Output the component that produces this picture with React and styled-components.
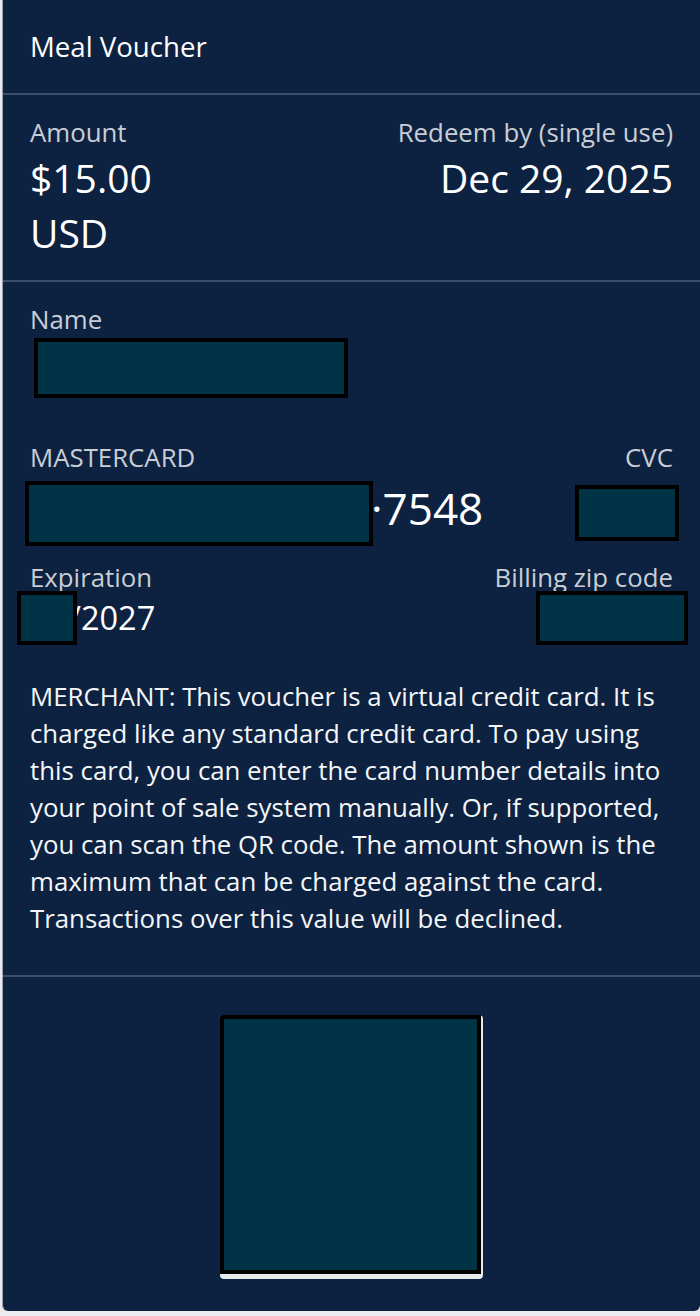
import React from 'react';
import styled, { createGlobalStyle } from 'styled-components';

const GlobalStyle = createGlobalStyle`
  html, body {
    margin: 0;
    padding: 0;
    background: #ececee;
  }
  body {
    font-family: 'Open Sans', 'Noto Sans', sans-serif;
  }
`;

const Card = styled.div`
  margin-left: 2px;
  height: 1311px;
  background-color: #0d2240;
  color: #ffffff;
  border-left: 1px solid #9aa3ae;
  border-radius: 0 0 6px 6px;
  box-shadow: 0 2px 3px rgba(0, 0, 0, 0.08);
  overflow: hidden;
`;

const Section = styled.div`
  padding: ${(props) => props.pad || '20px 27px 20px 27px'};
  border-bottom: ${(props) => (props.last ? 'none' : '2px solid #3d4f68')};
`;

const Title = styled.div`
  font-size: 27.6px;
  line-height: 33px;
`;

const Split = styled.div`
  display: flex;
  justify-content: space-between;
  align-items: flex-start;
`;

const Column = styled.div`
  display: flex;
  flex-direction: column;
  align-items: ${(props) => (props.right ? 'flex-end' : 'flex-start')};
  text-align: ${(props) => (props.right ? 'right' : 'left')};
`;

const Label = styled.div`
  font-size: 25.8px;
  line-height: 30px;
  color: #c9ced6;
`;

const BigValue = styled.div`
  font-size: 39px;
  line-height: 55px;
`;

const Redacted = styled.div`
  position: relative;
  z-index: 1;
  box-sizing: border-box;
  width: ${(props) => props.w}px;
  height: ${(props) => props.h}px;
  background-color: #003346;
  border: 4px solid #000;
  flex-shrink: 0;
`;

const Field = styled.div`
  display: flex;
  flex-direction: column;
  margin-bottom: ${(props) => props.mb || 0}px;
`;

const NumberRow = styled.div`
  display: flex;
  align-items: center;
`;

const CardDigits = styled.span`
  font-size: 44px;
  line-height: 56px;
  margin-left: -2px;
  margin-bottom: 10px;
`;

const ExpiryDigits = styled.span`
  font-size: 32.5px;
  line-height: 40px;
  margin-left: -8px;
`;

const Note = styled.p`
  margin: 0;
  font-size: 25.8px;
  line-height: 37px;
  color: #f4f6f9;
`;

const QrWrap = styled.div`
  display: flex;
  justify-content: center;
  padding-top: 38px;
`;

const QrFrame = styled.div`
  width: 263px;
  height: 264px;
  background-color: #e6eaee;
  border-radius: 4px;
  position: relative;
`;

const QrMask = styled.div`
  position: absolute;
  left: 0;
  top: 0;
  width: 261px;
  height: 259px;
  box-sizing: border-box;
  background-color: #003346;
  border: 4px solid #000;
  border-radius: 3px 0 0 0;
`;

export default function App() {
  return (
    <>
      <GlobalStyle />
      <Card>
        <Section pad="30px 27px 30px 27px">
          <Title>Meal Voucher</Title>
        </Section>

        <Section pad="22px 27px 20px 27px">
          <Split>
            <Column>
              <Label>Amount</Label>
              <BigValue style={{ marginTop: 3 }}>$15.00</BigValue>
              <BigValue>USD</BigValue>
            </Column>
            <Column right>
              <Label>Redeem by (single use)</Label>
              <BigValue style={{ marginTop: 3 }}>Dec 29, 2025</BigValue>
            </Column>
          </Split>
        </Section>

        <Section pad="22px 27px 38px 27px">
          <Field mb={44}>
            <Label>Name</Label>
            <Redacted w={314} h={60} style={{ marginLeft: 4, marginTop: 4 }} />
          </Field>

          <Split>
            <Field>
              <Label>MASTERCARD</Label>
              <NumberRow style={{ marginLeft: -5, marginTop: 8 }}>
                <Redacted w={348} h={65} />
                <CardDigits>·7548</CardDigits>
              </NumberRow>
            </Field>
            <Column right>
              <Label>CVC</Label>
              <Redacted w={104} h={56} style={{ marginTop: 13, marginRight: -6 }} />
            </Column>
          </Split>

          <Split style={{ marginTop: 16 }}>
            <Field>
              <Label>Expiration</Label>
              <NumberRow style={{ marginLeft: -13, marginTop: -1 }}>
                <Redacted w={60} h={54} />
                <ExpiryDigits>/2027</ExpiryDigits>
              </NumberRow>
            </Field>
            <Column right>
              <Label>Billing zip code</Label>
              <Redacted w={152} h={54} style={{ marginTop: -1, marginRight: -15 }} />
            </Column>
          </Split>

          <Note style={{ marginTop: 33 }}>
            MERCHANT: This voucher is a virtual credit card. It is charged like
            any standard credit card. To pay using this card, you can enter the
            card number details into your point of sale system manually. Or, if
            supported, you can scan the QR code. The amount shown is the maximum
            that can be charged against the card. Transactions over this value
            will be declined.
          </Note>
        </Section>

        <Section last pad="0">
          <QrWrap>
            <QrFrame>
              <QrMask />
            </QrFrame>
          </QrWrap>
        </Section>
      </Card>
    </>
  );
}
